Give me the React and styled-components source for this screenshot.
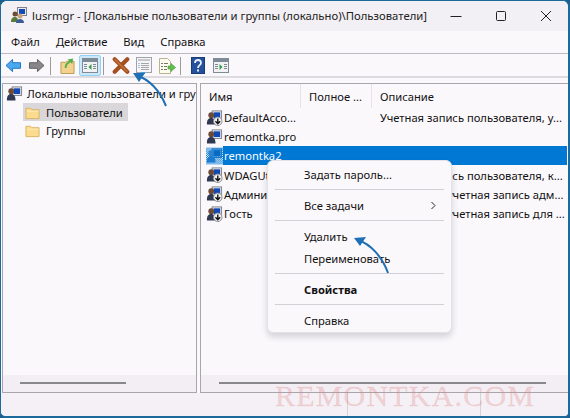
import React from "react";
import styled, { createGlobalStyle } from "styled-components";

const Global = createGlobalStyle`
  html, body { margin: 0; padding: 0; width: 570px; height: 418px; overflow: hidden; background: #1b5f8e; }
  * { box-sizing: border-box; }
`;
const Win = styled.div`
  position: relative; width: 570px; height: 418px; overflow: hidden;
  background: #fbf8fc; border: 1px solid #1c6a9c; border-radius: 7px 7px 6px 6px;
  border-bottom-width: 2px; border-right-width: 2px;
  font-family: "Noto Sans", "Open Sans", sans-serif; font-size: 11.2px; color: #111;
  display: flex; flex-direction: column;
`;
const Title = styled.header`
  height: 30px; background: #f3f0f5; display: flex; align-items: center; flex: none; padding: 0 0 2px 9px; gap: 4px;
`;
const TitleText = styled.div` flex: 1; min-width: 0; font-size: 11.3px; color: #222; white-space: nowrap; `;
const Ctrls = styled.div` display: flex; flex: none; width: 135px; height: 30px; margin-top: 2px; `;
const Ctrl = styled.div` width: 45px; display: flex; align-items: center; justify-content: center; `;
const Menu = styled.nav`
  height: 23px; display: flex; align-items: center; padding: 0 0 2px 10px; gap: 16px; flex: none;
  border-bottom: 1px solid #bdbbbf;
`;
const Tool = styled.div`
  height: 24px; display: flex; align-items: center; flex: none; padding: 1px 0 0 1px;
  border-bottom: 2px solid #dddbe0;
`;
const TB = styled.div`
  width: ${p => p.$w || 23}px; height: 21px; display: flex; align-items: center; justify-content: center; flex: none;
  ${p => p.$on && "background:#cde8f9;border:1px solid #95d1f2;border-radius:2px;"}
`;
const Sep = styled.div` width: 1px; height: 18px; background: #9a9a9c; flex: none; margin: 0 5px 0 2px; `;
const Panes = styled.main`
  flex: 1; display: flex; gap: 3px; padding: 5px 0 0 1px; min-height: 0;
`;
const Pane = styled.section`
  border: 1px solid #a8a6aa; display: flex; flex-direction: column; min-width: 0; overflow: hidden;
`;
const Left = styled(Pane)` width: 195px; flex: none; `;
const Right = styled(Pane)` flex: 1; border-right: 0; `;
const Tree = styled.div` flex: 1; padding: 0 0 0 3px; white-space: nowrap; overflow: hidden; `;
const TreeRoot = styled.div` display: flex; align-items: center; height: 19px; gap: 4px;`;
const TreeItem = styled.div`
  display: flex; align-items: center; height: 18px; margin-left: 17px; width: 105px; padding-left: 2px; gap: 6px;
  ${p => p.$sel && "background:#d9d7da;"}
`;
const Head = styled.div` display: flex; height: 24px; flex: none; align-items: center; `;
const HeadCell = styled.div`
  width: ${p => p.$w}px; height: 24px; padding: 0 0 0 8px; display: flex; align-items: center; flex: none;
  ${p => !p.$last && "border-right: 1px solid #e5e3e8;"}
`;
const Rows = styled.div` flex: 1; display: flex; flex-direction: column; overflow: hidden; `;
const Row = styled.div` display: flex; align-items: center; height: 19.2px; padding-left: 5px; white-space: nowrap; flex: none; `;
const Name = styled.div` width: 157px; padding-left: 1px; flex: none; `;
const NameSel = styled.div`
  flex: none; width: 344px; height: 19px; padding-left: 1px; line-height: 19px; background: #0078d4; color: #fdfdff;
`;
const Scroll = styled.div`
  height: 17px; flex: none; background: #f3eef4; padding: 7px ${p => p.$r}px 0 ${p => p.$l}px;
  &::after { content: ""; display: block; height: 2px; background: #88878a; }
`;
const Status = styled.footer` height: 23px; flex: none; display: flex; background: #f4f0f5; `;
const StatusCell = styled.div` width: ${p => p.$w}px; border-right: 1px solid #d5d3d7; flex: none; `;
const Ctx = styled.div`
  position: absolute; left: 266px; top: 159px; width: 185px; height: 173px;
  background: #fbf8fc; border: 1px solid #e4e2e6; border-radius: 6px;
  box-shadow: 0 4px 6px rgba(60,60,70,.2); padding: 2px 7px 0;
`;
const CtxItem = styled.div`
  height: 22px; display: flex; align-items: center; justify-content: space-between; padding: 0 7px 0 29px;
  ${p => p.$bold && "font-weight: 700;"}
`;
const CtxSep = styled.div` height: 1px; background: #d2d0d4; margin: 4px 0; `;
const Overlay = styled.svg` position: absolute; left: -1px; top: -1px; pointer-events: none; `;
const Watermark = styled.div`
  position: absolute; left: 274px; top: 378px; font-family: "Liberation Serif", serif; font-size: 30px; letter-spacing: 1.2px;
  color: rgba(225,130,130,.3); white-space: nowrap; pointer-events: none; -webkit-text-stroke: .3px rgba(225,130,130,.25);
`;

const Folder = () => (
  <svg width="15" height="15" viewBox="0 0 16 16" style={{ flex: "none" }}>
    <path d="M1 3.500h5l1.200 1.500H15v9.500H1z" fill="#fbdc8f" stroke="#d9b25e" />
    <path d="M2 6h12.500v1H2z" fill="#fff0c4" />
  </svg>
);
const UserIco = ({ sel, arrow }) => (
  <svg width="17" height="18" viewBox="0 0 18 18" style={{ flex: "none" }}>
    <rect x="6.500" y="1.500" width="10" height="9" fill={sel ? "#7fb5e6" : "#e8eaf0"} stroke={sel ? "#2a6fb5" : "#7c8088"} />
    <rect x="8" y="3" width="7" height="6" fill={sel ? "#0a5cb0" : "#1248b4"} />
    <circle cx="5.500" cy="6" r="3" fill={sel ? "#5a8fca" : "#6d4a36"} />
    <path d="M1 14.500c0-4 2-5.500 4.500-5.500S10 11 10 14.500V16H1z" fill={sel ? "#3d7fc8" : "#2f3a52"} />
    {arrow && <>
      <circle cx="12.500" cy="12.500" r="4.500" fill="#f3f3f3" stroke="#85878b" />
      <path d="M12.500 9.500v5M10 12.500l2.500 2.500 2.500-2.500" fill="none" stroke="#111" strokeWidth="1.500" />
    </>}
    {sel && <path d="M0 0h18v18H0z" fill="url(#dither)" />}
  </svg>
);
const Back = () => (
  <svg width="17" height="15" viewBox="0 0 18 16"><path d="M1 8l7-6.500V5h8.500v6H8v3.500z" fill="#4aa8ef" stroke="#1d6fc2" /></svg>
);
const Fwd = () => (
  <svg width="17" height="15" viewBox="0 0 18 16"><path d="M17 8l-7-6.500V5H1.500v6H10v3.500z" fill="#87878a" stroke="#5d5d60" /></svg>
);
const UpFolder = () => (
  <svg width="15" height="18" viewBox="0 0 16 18">
    <path d="M1 5h5l1-1h8v13H1z" fill="#f2d28c" stroke="#b99a55" />
    <path d="M5 11c0-4 2-6 5-7L8 2l6-1-1 6-1.500-2C9 6 7 8 7 11z" fill="#52b04b" />
  </svg>
);
const Panel = ({ c }) => (
  <svg width="16" height="15" viewBox="0 0 16 15">
    <rect x=".5" y=".5" width="15" height="14" fill="#f2f2f4" stroke="#7f8c97" />
    <rect x="1" y="1" width="14" height="3" fill="#7d8b96" />
    <path d="M2 6h3v1H2zM2 8h3v1H2zM2 10h3v1H2zM11 6h3v1h-3zM11 8h3v1h-3zM11 10h3v1h-3z" fill="#7d8b96" />
    <path d={c === "l" ? "M9.500 6v6L6.500 9z" : "M6.500 6v6l3-3z"} fill="#2f9e44" />
  </svg>
);
const Del = () => (
  <svg width="18" height="17" viewBox="0 0 20 18">
    <path d="M3 2l14 14M17 2L3 16" stroke="#a34f1f" strokeWidth="4.600" strokeLinecap="round" />
    <path d="M3 2l14 14" stroke="#c8743a" strokeWidth="1.500" />
  </svg>
);
const Props = () => (
  <svg width="16" height="17" viewBox="0 0 16 17">
    <rect x=".5" y=".5" width="15" height="15" fill="#f5f5f7" stroke="#a0a4aa" />
    <rect x="2" y="2" width="12" height="2" fill="#c5c8cd" />
    <path d="M5 6h8v1H5zM5 8h8v1H5zM5 10h8v1H5zM5 12h8v1H5z" fill="#a3a7ad" />
    <path d="M2.500 6h1v1h-1zM2.500 8h1v1h-1zM2.500 10h1v1h-1z" fill="#5a95cf" />
    <rect x="5" y="15" width="4" height="2" fill="#39a0e6" />
  </svg>
);
const Export = () => (
  <svg width="18" height="16" viewBox="0 0 18 16">
    <path d="M1.500.5h8l3 3v12h-11z" fill="#fdfcf0" stroke="#b8b48f" />
    <path d="M3 5h2v1H3zM3 8h2v1H3zM3 11h2v1H3zM6 5h4v1H6zM6 8h3v1H6zM6 11h3v1H6z" fill="#77756a" />
    <path d="M10 8h3V5.500l4.500 4-4.500 4V11h-3z" fill="#63c04e" stroke="#3d9a35" strokeWidth=".6" />
  </svg>
);
const Help = () => (
  <svg width="14" height="17" viewBox="0 0 14 17">
    <rect x=".5" y=".5" width="13" height="16" fill="#24509c" stroke="#1a3a78" />
    <path d="M4 6c0-4 6-4 6 0 0 2-3 2.500-3 5" fill="none" stroke="#e8eefa" strokeWidth="1.800" />
    <rect x="6" y="12.500" width="2" height="2" fill="#e8eefa" />
  </svg>
);
const Tiny = ({ children }) => <svg width="12" height="12" viewBox="0 0 12 12">{children}</svg>;

const rows = [
  ["DefaultAcco...", "Учетная запись пользователя, у...", true],
  ["remontka.pro", "", false],
  ["remontka2", "", false, true],
  ["WDAGUtilityA...", "Учетная запись пользователя, к...", true],
  ["Администра...", "Встроенная учетная запись адм...", true],
  ["Гость", "Встроенная учетная запись для ...", true],
];

export default function App() {
  return (
    <Win>
      <Global />
      <svg width="0" height="0" style={{ position: "absolute" }}>
        <defs>
          <pattern id="dither" width="2" height="2" patternUnits="userSpaceOnUse">
            <rect width="1" height="1" fill="#0078d4" /><rect x="1" y="1" width="1" height="1" fill="#0078d4" />
          </pattern>
        </defs>
      </svg>
      <Title>
        <svg width="18" height="18" viewBox="0 0 18 18" style={{ flex: "none" }}>
          <rect x="7.500" y="1.500" width="9" height="8" fill="#e8eaf0" stroke="#7c8088" />
          <rect x="9" y="3" width="6" height="5" fill="#1248b4" />
          <circle cx="5" cy="8" r="2.500" fill="#6d4a36" />
          <circle cx="10" cy="10" r="2.500" fill="#c9a27a" />
          <path d="M1 16c0-4 2-5 4-5s3 1 3 5z" fill="#5a7a3a" />
          <path d="M6 17c0-3 2-4 4-4s4 1 4 4z" fill="#3a5a9a" />
        </svg>
        <TitleText>lusrmgr - [Локальные пользователи и группы (локально)\Пользователи]</TitleText>
        <Ctrls>
          <Ctrl><Tiny><path d="M.5 6.500h11" stroke="#222" /></Tiny></Ctrl>
          <Ctrl><Tiny><rect x="1.500" y="1.500" width="9" height="9" rx="1" fill="none" stroke="#222" /></Tiny></Ctrl>
          <Ctrl><Tiny><path d="M1 1l10 10M11 1L1 11" stroke="#222" /></Tiny></Ctrl>
        </Ctrls>
      </Title>
      <Menu><span>Файл</span><span>Действие</span><span>Вид</span><span>Справка</span></Menu>
      <Tool>
        <TB><Back /></TB><TB><Fwd /></TB><Sep />
        <TB><UpFolder /></TB><TB $on $w={22}><Panel c="l" /></TB><Sep />
        <TB><Del /></TB><TB><Props /></TB><TB><Export /></TB><Sep />
        <TB><Help /></TB><TB><Panel c="r" /></TB>
      </Tool>
      <Panes>
        <Left>
          <Tree>
            <TreeRoot>
              <UserIco />
              <span>Локальные пользователи и группы (локально)</span>
            </TreeRoot>
            <TreeItem $sel><Folder /><span>Пользователи</span></TreeItem>
            <TreeItem><Folder /><span>Группы</span></TreeItem>
          </Tree>
          <Scroll $l={17} $r={70} />
        </Left>
        <Right>
          <Head>
            <HeadCell $w={100}>Имя</HeadCell>
            <HeadCell $w={71}>Полное ...</HeadCell>
            <HeadCell $w={190} $last>Описание</HeadCell>
          </Head>
          <Rows>
            {rows.map(([n, d, a, s]) => (
              <Row key={n}>
                <UserIco arrow={a} sel={s} />
                {s ? <NameSel>{n}</NameSel> : <><Name>{n}</Name><span>{d}</span></>}
              </Row>
            ))}
          </Rows>
          <Scroll $l={18} $r={22} />
        </Right>
      </Panes>
      <Status>
        <StatusCell $w={347} /><StatusCell $w={133} />
      </Status>
      <Ctx>
        <CtxItem>Задать пароль...</CtxItem>
        <CtxSep />
        <CtxItem>
          <span>Все задачи</span>
          <svg width="7" height="9" viewBox="0 0 7 9"><path d="M1.500 1l3.500 3.500L1.500 8" fill="none" stroke="#222" /></svg>
        </CtxItem>
        <CtxSep />
        <CtxItem>Удалить</CtxItem>
        <CtxItem>Переименовать</CtxItem>
        <CtxSep />
        <CtxItem $bold>Свойства</CtxItem>
        <CtxSep />
        <CtxItem>Справка</CtxItem>
      </Ctx>
      <Overlay width="570" height="418" viewBox="0 0 570 418">
        <path d="M136 75c12 4 23 14 30 31" fill="none" stroke="#1f6fb5" strokeWidth="2" />
        <path d="M133 73l12 0-6 9z" fill="#1f6fb5" />
        <path d="M358 240c12 4 24 16 30 33" fill="none" stroke="#1f6fb5" strokeWidth="2" />
        <path d="M354 238l12-1-6 9z" fill="#1f6fb5" />
      </Overlay>
      <Watermark>REMONTKA.COM</Watermark>
    </Win>
  );
}
